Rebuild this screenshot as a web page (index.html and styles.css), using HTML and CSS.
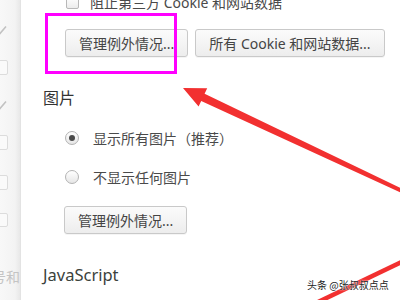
FILE: index.html
```html
<!DOCTYPE html>
<html lang="zh-CN">
<head>
<meta charset="utf-8">
<title>内容设置</title>
<link rel="stylesheet" href="styles.css">
</head>
<body>
<div class="page">
  <aside class="side">
    <span class="s-check s-c1"><svg viewBox="0 0 12 12" width="12" height="12"><path d="M1 6.5 L4.5 10 L11 2.5" fill="none" stroke="#c2c2c2" stroke-width="1.6"/></svg></span>
    <span class="s-box s-b1"></span>
    <span class="s-check s-c2"><svg viewBox="0 0 12 12" width="12" height="12"><path d="M1 6.5 L4.5 10 L11 2.5" fill="none" stroke="#c2c2c2" stroke-width="1.6"/></svg></span>
    <span class="s-box s-b2"></span>
    <span class="s-box s-b3"></span>
    <span class="s-box s-b4"></span>
    <span class="s-text">号和</span>
  </aside>
  <main class="main">
    <div class="row top-row"><span class="checkbox"></span><span>阻止第三方 Cookie 和网站数据</span></div>
    <div class="btns btns-1"><button class="btn">管理例外情况...</button><button class="btn">所有 Cookie 和网站数据...</button></div>
    <h2 class="heading h-img">图片</h2>
    <label class="row radio-row r1"><span class="radio on"></span>显示所有图片（推荐）</label>
    <label class="row radio-row r2"><span class="radio"></span>不显示任何图片</label>
    <div class="btns btns-2"><button class="btn">管理例外情况...</button></div>
    <h2 class="heading h-js">JavaScript</h2>
  </main>
  <div class="highlight"></div>
  <svg class="arrows" viewBox="0 0 400 300" width="400" height="300">
    <polygon fill="#f23030" points="183,88 207.2,88.3 204.6,93.7 425.8,200.1 424.2,203.3 201.2,101 198.6,106.4"/>
    <line x1="316" y1="303" x2="408" y2="259" stroke="#f23030" stroke-width="4.5"/>
  </svg>
  <div class="watermark">头条 @张叔叔点点</div>
</div>
</body>
</html>
```
FILE: styles.css
```css
* { box-sizing: border-box; }
html, body { margin: 0; padding: 0; background: #fff; }
body { width: 400px; height: 300px; overflow: hidden; font-family: "Noto Sans", "Noto Sans CJK SC", sans-serif; color: #444; }

.page { position: relative; width: 400px; height: 300px; overflow: hidden; display: flex; background: #fff; }

.side {
  flex: none; width: 21px; height: 300px;
  background: linear-gradient(to right, #f8f8f8, #f3f3f3 75%, #e8e8e8);
  border-right: 1px solid #e3e3e3;
  display: flex; flex-direction: column; align-items: flex-start;
  overflow: hidden;
}
.s-check { display: block; width: 12px; height: 12px; margin-left: -5px; }
.s-check svg { display: block; }
.s-box { display: block; width: 15px; height: 15px; margin-left: -7px; border: 1px solid #dcdcdc; border-radius: 2px; background: #fafafa; }
.s-c1 { margin-top: 24px; }
.s-b1 { margin-top: 24px; }
.s-c2 { margin-top: 24px; }
.s-b2 { margin-top: 24px; }
.s-b3 { margin-top: 25px; }
.s-b4 { margin-top: 23px; height: 14px; }
.s-text { display: block; margin-top: 41px; margin-left: -8px; white-space: nowrap; font-family: "Noto Sans CJK SC", sans-serif; font-size: 14px; line-height: 17px; color: #c4c4c4; }

.main { flex: 1; padding-left: 22px; display: flex; flex-direction: column; align-items: flex-start; }

.row { display: flex; align-items: center; height: 20px; font-family: "Noto Sans", "Noto Sans CJK SC", sans-serif; font-size: 14px; color: #4a4a4a; white-space: nowrap; }
.top-row { margin-top: -8px; margin-left: 23px; }
.checkbox { flex: none; width: 13px; height: 13px; margin-right: 11px; border: 1px solid #b8b8b8; border-radius: 2px; background: linear-gradient(#fff, #ececec); }

.btns { display: flex; gap: 7px; margin-left: 22px; }
.btns-1 { margin-top: 17px; }
.btns-2 { margin-top: 19px; margin-left: 21px; }
.btn {
  height: 28px; padding: 0 13px; margin: 0;
  font-family: "Noto Sans", "Noto Sans CJK SC", sans-serif; font-size: 14px; color: #444;
  background: linear-gradient(#fbfbfb, #ededed);
  border: 1px solid #c9c9c9; border-radius: 3px;
  box-shadow: 0 1px 0 rgba(0,0,0,0.04);
  white-space: nowrap;
}

.heading { margin: 0; font-weight: normal; line-height: 20px; color: #333; white-space: nowrap; }
.h-img { margin-top: 30px; font-family: "Noto Sans CJK SC", sans-serif; font-size: 16px; }
.h-js { margin-top: 31px; font-family: "Noto Sans", "Noto Sans CJK SC", sans-serif; font-size: 16.5px; color: #3b423c; }

.radio-row { margin-left: 22px; }
.r1 { margin-top: 21px; }
.r2 { margin-top: 19px; }
.radio { flex: none; position: relative; width: 14px; height: 14px; margin-right: 14px; border: 1px solid #b3b3b3; border-radius: 50%; background: linear-gradient(#fff, #e6e6e6); }
.radio.on::after { content: ""; position: absolute; left: 3px; top: 3px; width: 6px; height: 6px; border-radius: 50%; background: #4a4a4a; }

.highlight { position: absolute; left: 45px; top: 13px; width: 132px; height: 61px; border: 3px solid #f0f; }

.arrows { position: absolute; left: 0; top: 0; pointer-events: none; }

.watermark { position: absolute; left: 307px; top: 278px; font-family: "Noto Sans CJK SC", sans-serif; font-size: 10px; line-height: 14px; color: #222; text-shadow: 0 0 2px #fff, 0 0 1px #fff; white-space: nowrap; }
```
